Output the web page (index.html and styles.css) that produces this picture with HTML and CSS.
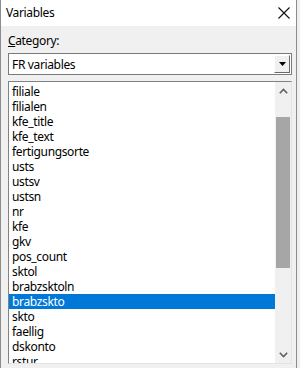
FILE: index.html
```html
<!doctype html>
<html>
<head>
    <meta charset="utf-8" />
    <title>Variables</title>
    <link rel="stylesheet" href="styles.css">
</head>
<body>
    <div class="window">
        <div class="titlebar">
            <span class="title">Variables</span>
            <svg class="close" width="12" height="12" viewBox="0 0 12 12">
                <path d="M0.5 0.5 L11.5 11.5 M11.5 0.5 L0.5 11.5" stroke="#111" stroke-width="1.1" fill="none"/>
            </svg>
        </div>
        <div class="content">
            <div class="label"><u>C</u>ategory:</div>
            <div class="combo">
                <span class="combo-text">FR variables</span>
                <div class="combo-btn">
                    <svg width="7" height="4" viewBox="0 0 7 4"><path d="M0 0 H7 L3.5 4 Z" fill="#000"/></svg>
                </div>
            </div>
            <div class="listbox">
                <ul class="items">
                    <li>filiale</li>
                    <li>filialen</li>
                    <li>kfe_title</li>
                    <li>kfe_text</li>
                    <li>fertigungsorte</li>
                    <li>usts</li>
                    <li>ustsv</li>
                    <li>ustsn</li>
                    <li>nr</li>
                    <li>kfe</li>
                    <li>gkv</li>
                    <li>pos_count</li>
                    <li>sktol</li>
                    <li>brabzsktoln</li>
                    <li class="selected">brabzskto</li>
                    <li>skto</li>
                    <li>faellig</li>
                    <li>dskonto</li>
                    <li>rstur</li>
                </ul>
                <div class="scrollbar">
                    <div class="arrow">
                        <svg width="9" height="6" viewBox="0 0 9 6"><path d="M0.8 5.2 L4.5 1.5 L8.2 5.2" stroke="#606060" stroke-width="1.6" fill="none"/></svg>
                    </div>
                    <div class="track">
                        <div class="thumb"></div>
                    </div>
                    <div class="arrow">
                        <svg width="9" height="6" viewBox="0 0 9 6"><path d="M0.8 0.8 L4.5 4.5 L8.2 0.8" stroke="#606060" stroke-width="1.6" fill="none"/></svg>
                    </div>
                </div>
            </div>
        </div>
    </div>
</body>
</html>
```

FILE: styles.css
```css
html, body {
    margin: 0;
    background-color: #f0f0f0;
}
body {
    font-family: 'Noto Sans', 'Open Sans', sans-serif;
    font-size: 12px;
    letter-spacing: -0.35px;
    color: #000;
}

.window {
    height: 368px;
    box-sizing: border-box;
    border-left: 1px solid #8c8c8c;
    border-right: 1px solid #8c8c8c;
    margin-right: 3px;
    display: flex;
    flex-direction: column;
    background-color: #f0f0f0;
}

.titlebar {
    height: 26px;
    flex: none;
    background-color: #fff;
    display: flex;
    align-items: center;
    justify-content: space-between;
    padding: 0 6px 0 5px;
}
    .title {
        font-size: 12px;
        margin-top: -2px;
    }
    .close {
        margin-top: -1px;
    }

.content {
    flex: 1;
    display: flex;
    flex-direction: column;
    padding: 7px 4px 4px 7px;
    min-height: 0;
}

.label {
    line-height: 15px;
    height: 15px;
}

.combo {
    margin-top: 5px;
    height: 22px;
    box-sizing: border-box;
    border: 1px solid #7a7a7a;
    background-color: #fff;
    display: flex;
    align-items: center;
    justify-content: space-between;
    padding: 0 1px 0 3px;
}
    .combo-btn {
        width: 16px;
        height: 18px;
        box-sizing: border-box;
        background-color: #f0f0f0;
        border-top: 1px solid #fff;
        border-left: 1px solid #fff;
        border-right: 1px solid #696969;
        border-bottom: 1px solid #696969;
        display: flex;
        align-items: center;
        justify-content: center;
    }

.listbox {
    margin-top: 6px;
    flex: 1;
    min-height: 0;
    box-sizing: border-box;
    border-top: 1px solid #828282;
    border-left: 1px solid #828282;
    border-right: 1px solid #e3e3e3;
    border-bottom: 1px solid #e3e3e3;
    background-color: #fff;
    display: flex;
    overflow: hidden;
}
    .items {
        list-style: none;
        margin: 0;
        padding: 2px 0 0 0;
        flex: 1;
        overflow: hidden;
    }
        .items li {
            height: 15px;
            line-height: 15px;
            padding-left: 3px;
            white-space: nowrap;
        }
        .items li.selected {
            background-color: #0078d7;
            color: #fff;
        }
    .scrollbar {
        width: 16px;
        flex: none;
        background-color: #f0f0f0;
        display: flex;
        flex-direction: column;
    }
        .arrow {
            height: 17px;
            flex: none;
            display: flex;
            align-items: center;
            justify-content: center;
        }
        .track {
            flex: 1;
            padding: 18px 1px 0 1px;
        }
            .thumb {
                height: 151px;
                background-color: #a6a6a6;
            }
```
